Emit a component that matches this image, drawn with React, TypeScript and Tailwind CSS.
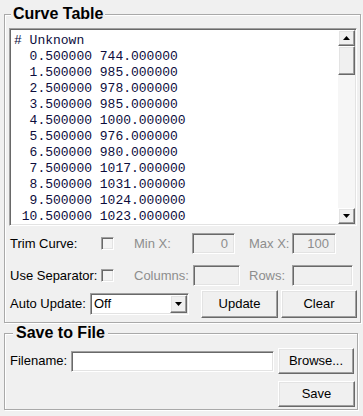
import React from "react";

const lines = [
  "# Unknown",
  "  0.500000 744.000000",
  "  1.500000 985.000000",
  "  2.500000 978.000000",
  "  3.500000 985.000000",
  "  4.500000 1000.000000",
  "  5.500000 976.000000",
  "  6.500000 980.000000",
  "  7.500000 1017.000000",
  "  8.500000 1031.000000",
  "  9.500000 1024.000000",
  " 10.500000 1023.000000",
];

const raised =
  "border border-t-white border-l-white border-r-[#696969] border-b-[#696969] shadow-[inset_-1px_-1px_0_#a0a0a0,inset_1px_1px_0_#e3e3e3] bg-[#f0f0f0]";
const sunken =
  "border border-t-[#a0a0a0] border-l-[#a0a0a0] border-r-white border-b-white shadow-[inset_1px_1px_0_#696969,inset_-1px_-1px_0_#e3e3e3]";

function Arrow({ down }: { down?: boolean }) {
  return (
    <svg width="7" height="4" viewBox="0 0 7 4">
      {down ? <path d="M0 0H7L3.5 4Z" fill="#000" /> : <path d="M0 4H7L3.5 0Z" fill="#000" />}
    </svg>
  );
}

function Check() {
  return <div className={`w-[13px] h-[13px] bg-[#f4f4f4] ${sunken}`} />;
}

function Field({ w, value }: { w: string; value?: string }) {
  return (
    <div className={`${w} h-[21px] bg-[#f0f0f0] ${sunken} flex items-center justify-end pr-[6px] text-[#8d8d8d]`}>
      {value}
    </div>
  );
}

function Button({ w, h, label, extra }: { w: string; h: string; label: string; extra?: string }) {
  return (
    <div className={`${w} ${h} ${raised} ${extra ?? ""} flex items-center justify-center text-black`}>
      {label}
    </div>
  );
}

export default function App() {
  return (
    <div className="w-[363px] h-[416px] bg-[#f0f0f0] px-[4px] pt-[5px] text-[13px] text-black font-['Liberation_Sans',Arial,sans-serif]">
      <fieldset className="w-[354px] border border-[#a9a9a9] shadow-[inset_1px_1px_0_#fff,1px_1px_0_#fff] pl-[4px] pr-[3px] pb-[4px] m-0">
        <legend className="ml-[2px] px-[2px] bg-[#f0f0f0] text-[16px] font-bold leading-[18px]">Curve Table</legend>

        <div className={`mt-[5px] h-[198px] flex bg-white ${sunken} p-[1px]`}>
          <div className="flex-1 overflow-hidden pl-[3px] pt-[3px] font-['Liberation_Mono',monospace] text-[13px] leading-[16px] text-[#0c0c3c] whitespace-pre">
            {lines.map((l, i) => (
              <div key={i}>{l}</div>
            ))}
          </div>
          <div className="w-[17px] flex flex-col bg-[#f6f6f6]">
            <div className={`h-[16px] ${raised} flex items-center justify-center`}>
              <Arrow />
            </div>
            <div className={`h-[29px] ${raised}`} />
            <div className="flex-1" />
            <div className={`h-[16px] ${raised} flex items-center justify-center`}>
              <Arrow down />
            </div>
          </div>
        </div>

        <div className="mt-[7px] h-[21px] flex items-center pl-[1px]">
          <div className="w-[91px]">Trim Curve:</div>
          <Check />
          <div className="w-[20px]" />
          <div className="w-[58px] text-[#8d8d8d]">Min X:</div>
          <Field w="w-[43px]" value="0" />
          <div className="w-[14px]" />
          <div className="w-[43px] text-[#8d8d8d]">Max X:</div>
          <Field w="w-[44px]" value="100" />
        </div>

        <div className="mt-[11px] h-[21px] flex items-center pl-[1px]">
          <div className="w-[91px]">Use Separator:</div>
          <Check />
          <div className="w-[20px]" />
          <div className="w-[59px] text-[#8d8d8d]">Columns:</div>
          <Field w="w-[47px]" />
          <div className="w-[9px]" />
          <div className="w-[43px] text-[#8d8d8d]">Rows:</div>
          <Field w="w-[61px]" />
        </div>

        <div className="mt-[4px] h-[28px] flex items-center pl-[1px]">
          <div className="w-[80px]">Auto Update:</div>
          <div className={`w-[99px] h-[22px] bg-white ${sunken} flex items-center p-[1px]`}>
            <div className="flex-1 pl-[2px]">Off</div>
            <div className={`w-[17px] h-[18px] ${raised} flex items-center justify-center`}>
              <Arrow down />
            </div>
          </div>
          <div className="w-[12px]" />
          <Button w="w-[77px]" h="h-[28px]" label="Update" />
          <div className="w-[3px]" />
          <Button w="w-[76px]" h="h-[28px]" label="Clear" />
        </div>
      </fieldset>

      <fieldset className="mt-[1px] w-[354px] border border-[#a9a9a9] shadow-[inset_1px_1px_0_#fff,1px_1px_0_#fff] pl-[5px] pr-[2px] pb-[2px] m-0">
        <legend className="ml-[3px] px-[3px] bg-[#f0f0f0] text-[16px] font-bold leading-[18px]">Save to File</legend>

        <div className="mt-[6px] h-[26px] flex items-center">
          <div className="w-[61px]">Filename:</div>
          <div className={`w-[203px] h-[21px] bg-white ${sunken}`} />
          <div className="w-[4px]" />
          <Button w="w-[76px]" h="h-[26px]" label="Browse..." />
        </div>

        <div className="mt-[7px] flex justify-end">
          <Button w="w-[77px]" h="h-[26px]" label="Save" />
        </div>
      </fieldset>
    </div>
  );
}
